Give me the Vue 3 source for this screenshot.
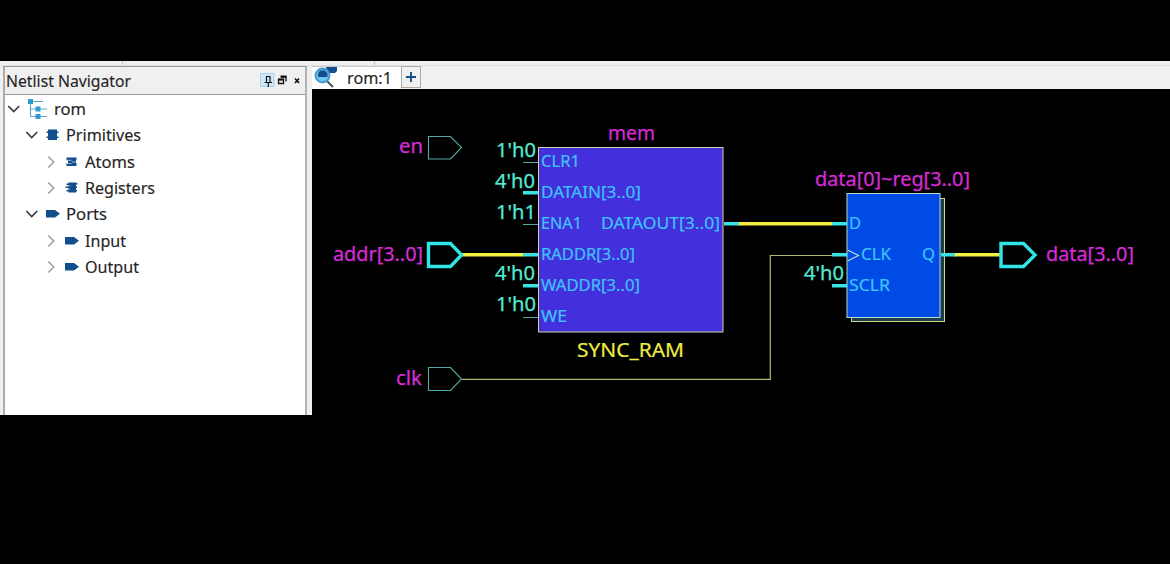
<script setup>
const tree = [
  { label: 'rom', level: 0, open: true, icon: 'tree', w: 32 },
  { label: 'Primitives', level: 1, open: true, icon: 'chip', w: 75 },
  { label: 'Atoms', level: 2, open: false, icon: 'atom', w: 50 },
  { label: 'Registers', level: 2, open: false, icon: 'register', w: 70 },
  { label: 'Ports', level: 1, open: true, icon: 'port', w: 41 },
  { label: 'Input', level: 2, open: false, icon: 'port', w: 41 },
  { label: 'Output', level: 2, open: false, icon: 'port', w: 54 },
]

const names = [
  { t: 'en', x: 399, y: 153, w: 24 },
  { t: 'addr[3..0]', x: 333, y: 260.5, w: 90 },
  { t: 'clk', x: 396, y: 384.5, w: 26 },
  { t: 'mem', x: 608, y: 139.5, w: 47 },
  { t: 'data[0]~reg[3..0]', x: 815, y: 185.5, w: 155 },
  { t: 'data[3..0]', x: 1046, y: 260.5, w: 88 },
]

const constants = [
  { t: "1'h0", x: 496, y: 156.5 },
  { t: "4'h0", x: 495, y: 187.5 },
  { t: "1'h1", x: 496, y: 218.5 },
  { t: "4'h0", x: 495, y: 279.5 },
  { t: "1'h0", x: 496, y: 310.5 },
  { t: "4'h0", x: 804, y: 279.5 },
]

const pins = [
  { t: 'CLR1', x: 541, y: 167, w: 39 },
  { t: 'DATAIN[3..0]', x: 541, y: 198, w: 100 },
  { t: 'ENA1', x: 541, y: 229, w: 41 },
  { t: 'DATAOUT[3..0]', x: 601, y: 229, w: 119 },
  { t: 'RADDR[3..0]', x: 541, y: 260, w: 94 },
  { t: 'WADDR[3..0]', x: 541, y: 291, w: 99 },
  { t: 'WE', x: 541, y: 322, w: 26 },
  { t: 'D', x: 849, y: 229, w: 12 },
  { t: 'CLK', x: 861, y: 260, w: 30 },
  { t: 'SCLR', x: 849, y: 291, w: 41 },
  { t: 'Q', x: 922, y: 260, w: 13 },
]
</script>

<template>
  <div class="screen">
    <div class="window">
      <div class="toolbar"><i class="sep first"></i><i class="sep second"></i></div>
      <div class="body">
        <aside class="panel">
          <header class="title">
            <svg class="title-text" width="135" height="26"><text x="1" y="20" textLength="125" lengthAdjust="spacingAndGlyphs">Netlist Navigator</text></svg>
            <svg class="controls" width="46" height="26" viewBox="0 0 46 26">
              <rect x="1.500" y="6.500" width="13.500" height="13" fill="#cde8f8" stroke="#a8d3ee" />
              <path d="M7 9.500h4.500M7.500 9.500v6M11 9.500v6M5.500 15.500h7.500M9.300 16v4" fill="none" stroke="#111" stroke-width="1.200" />
              <path d="M22 10h5v4.500M19.500 12.500h5v4h-5z" fill="none" stroke="#111" stroke-width="1.300" />
              <path d="M21.500 9.500h6M19 12.500h6" stroke="#111" stroke-width="1.800" />
              <path d="M36 11.500l4 4.500M40 11.500l-4 4.500" stroke="#111" stroke-width="1.600" />
            </svg>
          </header>
          <ul class="tree">
            <li v-for="row in tree" :key="row.label" :class="'level' + row.level">
              <svg class="chevron" width="14" height="14" viewBox="0 0 14 14">
                <path v-if="row.open" d="M1.300 4l5.400 5.500L12.200 4" stroke="#383838" />
                <path v-else d="M4.300 1.500l5.400 5.500-5.400 5.500" stroke="#a2a2a2" />
              </svg>
              <svg v-if="row.icon === 'tree'" class="icon root" width="22" height="22" viewBox="0 0 22 22">
                <path d="M3.500 4v14.500h6M3.500 11h6M6 3.500h10M11 11h9M11 18.500h9" fill="none" stroke="#69a6c5" stroke-width="1.200" />
                <path d="M1 1h5v5H1zM8.500 8.500h5v5h-5zM8.500 16h5v5h-5z" fill="#2b9dd3" />
              </svg>
              <svg v-else-if="row.icon === 'port'" class="icon" width="15" height="12" viewBox="0 0 15 12">
                <path d="M1 2h9l5 3.700-5 3.700H1z" fill="#114f8c" />
              </svg>
              <svg v-else-if="row.icon === 'chip'" class="icon" width="15" height="12" viewBox="0 0 15 12">
                <path d="M3 .5h9v10.500H3zM1.500 2.500h12v1.500h-12zM1.500 7.500h12v1.500h-12z" fill="#114f8c" />
              </svg>
              <svg v-else-if="row.icon === 'atom'" class="icon" width="15" height="12" viewBox="0 0 15 12">
                <path d="M2.500 1.500h10v2.800h-10zM4 4.300h8v3H4zM2.500 7h10v3h-10z" fill="#114f8c" />
                <path d="M2.500 4.300h5M8 6h4M2.500 7.500h5" stroke="#a9c6dd" stroke-width=".9" />
              </svg>
              <svg v-else class="icon" width="15" height="12" viewBox="0 0 15 12">
                <path d="M4.500 .5h7.500v10H4.500zM2.500 1.500h2V3h-2zM1.500 4.500h3V6h-3zM2.500 8h2v1.500h-2zM12 1h1.500v1.500H12zM12 4.500h1V6h-1zM12 8h1v1.500h-1z" fill="#114f8c" />
                <path d="M3.500 3.800h3M3.500 7h3" stroke="#7ca6c9" stroke-width=".8" />
              </svg>
              <svg class="label" :width="row.w + 4" height="26"><text x="0" y="19.300" :textLength="row.w" lengthAdjust="spacingAndGlyphs">{{ row.label }}</text></svg>
            </li>
          </ul>
        </aside>
        <main class="editor">
          <nav class="tabs">
            <div class="tab">
              <svg width="26" height="23" viewBox="0 0 26 23">
                <path d="M14 0h11v4l-2 2h-7z" fill="#124d8d" />
                <path d="M14.500 13.500l6.500 6.500" stroke="#4e5964" stroke-width="2.200" />
                <circle cx="10.500" cy="8.500" r="7" fill="#70c4ed" stroke="#3d9bcc" stroke-width="1.800" />
                <path d="M6 6.500l2-3h5l2.500 3v3.500H6z" fill="#124d8d" />
              </svg>
              <svg class="tab-label" width="48" height="23"><text x="0" y="17" textLength="45" lengthAdjust="spacingAndGlyphs">rom:1</text></svg>
            </div>
            <button class="add"><svg width="12" height="12" viewBox="0 0 12 12"><path d="M1 6h10M6 1v10" stroke="#174f84" stroke-width="1.900" /></svg></button>
          </nav>
          <svg class="schematic" width="858" height="326" viewBox="312 89 858 326">
            <rect x="851.500" y="198.500" width="93" height="123" fill="#1d3d4c" stroke="#c9dc85" />
            <rect x="538.500" y="147.500" width="184.500" height="184.500" fill="#432fdb" stroke="#d5d2a0" />
            <rect x="847" y="193.500" width="93" height="124" fill="#004be6" stroke="#b5dcc5" />

            <g class="thin">
              <path d="M428.500 136.500h22l11 11-11 11.500h-22z" />
              <path d="M428.500 367.500h22l11 11.500-11 11.500h-22z" />
              <path d="M523 162.500h15M523 224.500h15M523 317.500h15" />
            </g>
            <path d="M462 379.300H770.300V255.500H832" fill="none" stroke="#b5b474" stroke-width="1.200" />
            <g class="bus">
              <path d="M461 254.800h63M738 223.700h94M954 254.800h47" />
            </g>
            <g class="stub">
              <path d="M523 192.800h15M523 254.800h15M523 285.800h15M724 223.700h15M832 223.700h15M832 254.800h15M832 285.800h15M941 254.800h14" />
            </g>
            <g class="port">
              <path d="M428.500 243.500h22l11 11.500-11 11.500h-22z" />
              <path d="M1001 243.500h22.500l11.500 11.500-11.500 11.500H1001z" />
            </g>
            <path d="M848 250.300l10.500 5.200-10.500 5.200" fill="none" stroke="#bfe0d0" stroke-width="1.100" />

            <text v-for="n in names" :key="n.t" class="name" :x="n.x" :y="n.y" :textLength="n.w" lengthAdjust="spacingAndGlyphs">{{ n.t }}</text>
            <text v-for="(c, i) in constants" :key="i" class="constant" :x="c.x" :y="c.y" textLength="40" lengthAdjust="spacingAndGlyphs">{{ c.t }}</text>
            <text v-for="p in pins" :key="p.t" class="pin" :x="p.x" :y="p.y" :textLength="p.w" lengthAdjust="spacingAndGlyphs">{{ p.t }}</text>
            <text class="type" x="577" y="357" textLength="107" lengthAdjust="spacingAndGlyphs">SYNC_RAM</text>
          </svg>
        </main>
      </div>
    </div>
  </div>
</template>

<style>
body { background: #000; overflow: hidden; }
</style>

<style scoped>
.screen { height: 564px; padding-top: 61px; box-sizing: border-box; background: #000; font-family: "Noto Sans", "Open Sans", sans-serif; }
.window { height: 354px; background: #f0f0f0; display: flex; flex-direction: column; }
.toolbar { height: 5px; display: flex; box-sizing: border-box; border-bottom: 1px solid #dedede; }
.sep { width: 1px; height: 4px; background: #c7c7c7; }
.first { margin-left: 122px; }
.second { margin-left: 251px; }
.body { display: flex; height: 349px; }
.panel { box-sizing: border-box; width: 304px; margin-left: 3px; margin-right: 5px; border-left: 2px solid #adadad; border-right: 2px solid #b2b2b2; border-top: 1px solid #999; background: #fff; }
.title { height: 27px; display: flex; justify-content: space-between; background: #f0f0f0; border-bottom: 1px solid #999; }
svg { display: block; flex: none; }
.title-text text, .label text, .tab-label text { font-size: 16px; fill: #252525; stroke: #252525; stroke-width: 0.15; }
.tree { list-style: none; margin: 1px 0 0; padding: 0; }
.tree li { height: 26.3px; display: flex; align-items: center; }
.level0 { padding-left: 2px; }
.level1 { padding-left: 20px; }
.level2 { padding-left: 39px; }
.chevron path { fill: none; stroke-width: 1.6; }
.icon { margin-left: 6px; }
.label { margin-left: 5.500px; }
.root { margin-left: 6px; }
.root + .label { margin-left: 5px; }
.editor { width: 858px; display: flex; flex-direction: column; }
.tabs { height: 23px; display: flex; align-items: flex-start; }
.tab { width: 89px; height: 23px; background: #fff; display: flex; gap: 9px; box-sizing: border-box; border-top: 1px solid #ccc; }
.add { width: 20px; height: 22px; padding: 0; box-sizing: border-box; border: 1px solid #aaa; background: #f0f0f0; display: grid; place-items: center; }
.schematic { background: #000; }
.thin path { fill: none; stroke: #54aaa2; stroke-width: 1.1; }
.bus path { stroke: #f4ee3f; stroke-width: 3.4; }
.stub path { stroke: #38e2e5; stroke-width: 3.4; }
.port path { fill: none; stroke: #30e5e8; stroke-width: 3.4; }
.name { font-size: 19px; fill: #d72bd7; stroke: #d72bd7; stroke-width: 0.25; }
.constant { font-size: 19.5px; fill: #55ead2; stroke: #55ead2; stroke-width: 0.25; }
.pin { font-size: 16px; fill: #3fc3fb; stroke: #3fc3fb; stroke-width: 0.2; }
.type { font-size: 19px; fill: #eded45; stroke: #eded45; stroke-width: 0.2; }
</style>
